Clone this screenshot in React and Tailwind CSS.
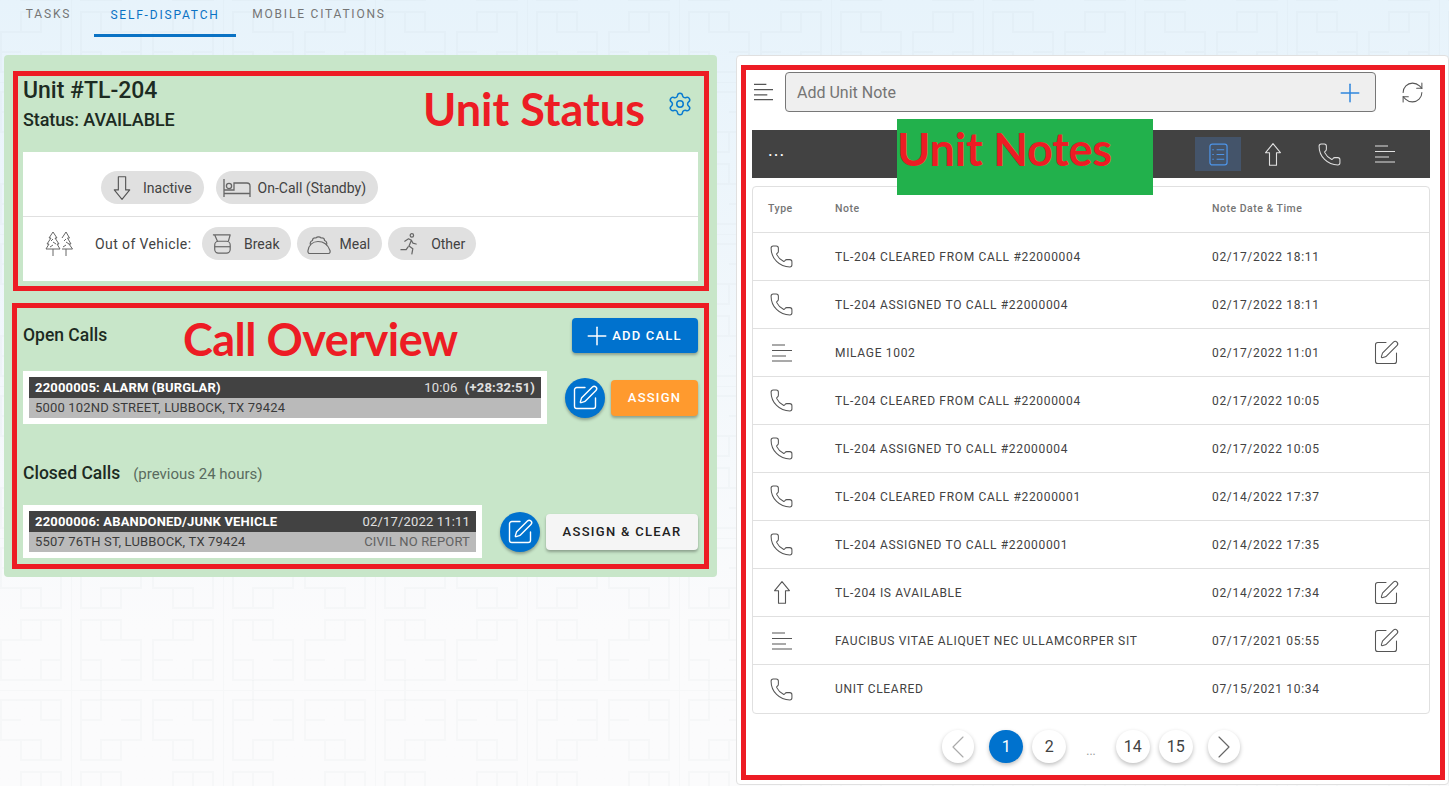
import { ChevronLeft, ChevronRight, Phone, Plus, RefreshCw, Settings, SquarePen } from "lucide-react";

const notes = [
  { type: "phone", text: "TL-204 CLEARED FROM CALL #22000004", date: "02/17/2022 18:11" },
  { type: "phone", text: "TL-204 ASSIGNED TO CALL #22000004", date: "02/17/2022 18:11" },
  { type: "note", text: "MILAGE 1002", date: "02/17/2022 11:01", edit: true },
  { type: "phone", text: "TL-204 CLEARED FROM CALL #22000004", date: "02/17/2022 10:05" },
  { type: "phone", text: "TL-204 ASSIGNED TO CALL #22000004", date: "02/17/2022 10:05" },
  { type: "phone", text: "TL-204 CLEARED FROM CALL #22000001", date: "02/14/2022 17:37" },
  { type: "phone", text: "TL-204 ASSIGNED TO CALL #22000001", date: "02/14/2022 17:35" },
  { type: "up", text: "TL-204 IS AVAILABLE", date: "02/14/2022 17:34", edit: true },
  { type: "note", text: "FAUCIBUS VITAE ALIQUET NEC ULLAMCORPER SIT", date: "07/17/2021 05:55", edit: true },
  { type: "phone", text: "UNIT CLEARED", date: "07/15/2021 10:34", last: true },
];

const LinesIcon = ({ className }) => (
  <svg viewBox="0 0 20 18" fill="none" stroke="currentColor" strokeWidth="1.2" className={className}>
    <path d="M0 1h13M0 6.500h20M0 12h14M0 17h20" />
  </svg>
);

const ArrowIcon = ({ className }) => (
  <svg viewBox="0 0 16 23" fill="none" stroke="currentColor" strokeWidth="1.1" strokeLinejoin="round" className={className}>
    <path d="M8 .7L15.400 9.700H11.500V22.300H4.500V9.700H.6Z" />
  </svg>
);

const BedIcon = () => (
  <svg viewBox="0 0 28 20" fill="none" stroke="currentColor" strokeWidth="1.300" className="h-5 w-7 text-[#666]">
    <path d="M1 1v18M1 15.500h26V19M27 15.500V8a3 3 0 0 0-3-3H11v7H1" />
    <circle cx="6" cy="8" r="2.600" />
  </svg>
);

const PotIcon = () => (
  <svg viewBox="0 0 22 24" fill="none" stroke="currentColor" strokeWidth="1.300" strokeLinejoin="round" className="h-6 w-5 text-[#666]">
    <path d="M1 2h19l-2 7M3 2l3 7" />
    <rect x="3" y="9" width="17" height="13" rx="4" />
    <path d="M3 15h17" />
  </svg>
);

const TacoIcon = () => (
  <svg viewBox="0 0 24 22" fill="none" stroke="currentColor" strokeWidth="1.200" strokeLinejoin="round" className="h-[22px] w-6 text-[#666]">
    <path d="M2.500 20.500c-1.500 0-1.700-2-1.500-3C2 12 6 8.500 11 8.500c5.500 0 10 3.500 12 9 .4 1.500 0 3-1.500 3z" />
    <path d="M3.500 12c-1-2.500.5-4 2-4.500 0-2 1.500-3 3.500-2.500 1-1.500 4-1.500 5 0 2-.5 3.500.5 3.500 2.500 1.500.5 3 2 2 4.500" />
  </svg>
);

const RunnerIcon = () => (
  <svg viewBox="0 0 20 24" fill="none" stroke="currentColor" strokeWidth="1.300" strokeLinecap="round" strokeLinejoin="round" className="h-6 w-[19px] text-[#666]">
    <circle cx="12.500" cy="3" r="1.800" />
    <path d="M5 9l4-2.500 3 1.500-2.500 6 4 3-1 5.500M12 8l1.500 3 3.500 1M8.500 15l-2 3H1" />
  </svg>
);

const TreesIcon = () => (
  <svg viewBox="0 0 29 25" fill="none" stroke="currentColor" strokeWidth="1" strokeLinejoin="round" className="h-[25px] w-[29px] text-[#666]">
    <path d="M8 1l4 6h-2l4 6h-2l3 5H1l3-5H2l4-6H4zM8 18v7M8 8l-2 2M8 11l3 2M8 14l-3 2" />
    <path d="M21 1l3.500 6h-2l3.500 6h-2l3.500 5H17M21 18v7M21 8l-2 2M21 11l3 2M21 14l-3 2M17 7l4-6" />
  </svg>
);

const ChecklistIcon = () => (
  <svg viewBox="0 0 20 24" fill="none" stroke="currentColor" strokeWidth="1.300" className="h-[23px] w-[19px] text-[#4d94e8]">
    <rect x="1" y="1" width="18" height="22" rx="2.500" />
    <path d="M8 7h8M8 12h8M8 17h8M3.500 7h1.500M3.500 12h1.500M3.500 17h1.500" />
  </svg>
);

const Chip = ({ icon, label, className }) => (
  <div className={`flex h-[33px] items-center rounded-full bg-[#e0e0e0] text-sm text-[#424242] ${className}`}>
    {icon}
    <span>{label}</span>
  </div>
);

const EditCircle = () => (
  <button className="flex h-10 w-10 items-center justify-center rounded-full bg-[#0072ce] text-white shadow-[0_2px_3px_rgba(0,0,0,0.3)]">
    <SquarePen size={28} strokeWidth={1.2} />
  </button>
);

const CallCard = ({ className, title, time, address, note }) => (
  <div className={`h-[53px] bg-white p-1.5 text-[13px] tracking-[0.17px] ${className}`}>
    <div className="flex h-[21px] items-center justify-between bg-[#424242] px-1.5 text-white">
      <span className="font-bold">{title}</span>
      <span className="text-[#e0e0e0]">{time}</span>
    </div>
    <div className="flex h-5 items-center justify-between bg-[#bababa] px-1.5 text-[#3a3a3a]">
      <span>{address}</span>
      <span className="text-[#616161]">{note}</span>
    </div>
  </div>
);

const PageButton = ({ children, className }) => (
  <button className={`flex h-[33px] items-center justify-center rounded-full text-base shadow-[0_2px_4px_rgba(0,0,0,0.25)] ${className}`}>
    {children}
  </button>
);

const BackgroundPattern = () => (
  <svg className="absolute inset-0 h-full w-full" xmlns="http://www.w3.org/2000/svg">
    <defs>
      <g id="cell" fill="none">
        <path d="M10 10H70V50H50V70H10ZM30 10V30H10M50 30H70M50 50H30V70" />
      </g>
      <pattern id="tile" x="71" y="82" width="152" height="152" patternUnits="userSpaceOnUse">
        <g stroke="#7f8c99" strokeOpacity="0.04" strokeWidth="2" fill="none">
          <use href="#cell" />
          <use href="#cell" transform="matrix(-1 0 0 1 152 0)" />
          <use href="#cell" transform="matrix(1 0 0 -1 0 152)" />
          <use href="#cell" transform="matrix(-1 0 0 -1 152 152)" />
          <path d="M0 0V152M0 0H152M30 -10V10M30 142V162" />
        </g>
      </pattern>
    </defs>
    <rect width="100%" height="100%" fill="url(#tile)" />
  </svg>
);

export default function App() {
  return (
    <div className="relative flex h-[786px] w-[1449px] overflow-hidden bg-linear-to-b from-[#e7f3fb] to-[#fbfbfc] to-80% font-[Roboto,sans-serif]">
      <BackgroundPattern />

      {/* left column */}
      <div className="relative w-[736px] shrink-0 pl-1">
        <div className="flex h-[37px] pl-[6px] text-xs tracking-[1.800px] uppercase text-[#757575]">
          <div className="flex h-[28px] w-[77px] items-center justify-center">Tasks</div>
          <div className="ml-[7px] flex h-[37px] w-[142px] justify-center border-b-[3px] border-[#0a72c4] pt-[7px] text-[#0a72c4]">Self-Dispatch</div>
          <div className="flex h-[28px] w-[166px] items-center justify-center">Mobile Citations</div>
        </div>

        <div className="mt-[18px] h-[522px] w-[713px] rounded bg-[#c8e6c9] pt-4">
          {/* unit status */}
          <div className="relative ml-[9px] h-[220px] w-[696px] border-[5px] border-[#ed1c24] pr-[6px] pl-[5px] text-[#1c2b22]">
            <div className="flex h-[76px] justify-between">
              <div>
                <div className="h-[29px] text-[23px] leading-[30px] font-medium">Unit #TL-204</div>
                <div className="mt-[3px] h-6 text-lg leading-6 font-medium tracking-[-0.1px]">Status: AVAILABLE</div>
              </div>
              <Settings size={26} strokeWidth={1.4} className="mt-[15px] mr-[5px] text-[#0a7cd0]" />
            </div>
            <div className="bg-white">
              <div className="flex h-[65px] items-start gap-3 border-b border-[#e0e0e0] pt-[19px] pl-[78px]">
                <Chip className="pr-3 pl-[12px]" label="Inactive" icon={<ArrowIcon className="mr-3 h-6 w-[18px] rotate-180 text-[#555]" />} />
                <Chip className="pr-3 pl-[7px]" label="On-Call (Standby)" icon={<span className="mr-[7px]"><BedIcon /></span>} />
              </div>
              <div className="flex h-[64px] items-start pt-[10px] pl-[22px] text-sm text-[#424242]">
                <span className="mt-1 w-[50px]"><TreesIcon /></span>
                <span className="mt-[7px] w-[107px] tracking-[0.4px]">Out of Vehicle:</span>
                <div className="flex gap-1.5">
                  <Chip className="pr-3 pl-[10px]" label="Break" icon={<span className="mr-3"><PotIcon /></span>} />
                  <Chip className="pr-3 pl-[10px]" label="Meal" icon={<span className="mr-2"><TacoIcon /></span>} />
                  <Chip className="pr-[11px] pl-3" label="Other" icon={<span className="mr-3"><RunnerIcon /></span>} />
                </div>
              </div>
            </div>
            <div className="absolute top-[5px] left-[405px] font-[Lato,sans-serif] text-[45px] leading-[56px] font-bold text-[#ed1c24]">Unit Status</div>
          </div>

          {/* call overview */}
          <div className="relative mt-3 ml-2 h-[266px] w-[697px] border-[5px] border-[#ed1c24] px-[6px] pt-[10px] text-[#1c2b22]">
            <div className="flex h-[35px] items-center justify-between">
              <span className="text-[17.500px] font-medium">Open Calls</span>
              <button className="flex h-[35px] w-[126px] items-center justify-center rounded bg-[#0072ce] pr-[6px] text-[13px] font-medium tracking-[1.200px] text-white shadow-[0_2px_3px_rgba(0,0,0,0.3)]">
                <Plus size={30} strokeWidth={1.2} />
                ADD CALL
              </button>
            </div>
            <div className="mt-[18px] flex items-center justify-between">
              <CallCard
                className="w-[524px]"
                title="22000005: ALARM (BURGLAR)"
                time={<>10:06 <b className="ml-1 font-bold">(+28:32:51)</b></>}
                address="5000 102ND STREET, LUBBOCK, TX 79424"
              />
              <div className="flex items-center gap-1.5">
                <EditCircle />
                <button className="h-9 w-[87px] rounded bg-[#ff9a2e] text-[13px] font-medium tracking-[1.200px] text-white shadow-[0_2px_3px_rgba(0,0,0,0.3)]">ASSIGN</button>
              </div>
            </div>
            <div className="mt-[37px] flex h-6 items-center">
              <span className="text-[17.500px] font-medium">Closed Calls</span>
              <span className="mt-0.5 ml-[13px] text-[15px] text-[#5a6b5e]">(previous 24 hours)</span>
            </div>
            <div className="mt-5 flex items-center justify-between">
              <CallCard
                className="w-[459px]"
                title="22000006: ABANDONED/JUNK VEHICLE"
                time="02/17/2022 11:11"
                address="5507 76TH ST, LUBBOCK, TX 79424"
                note="CIVIL NO REPORT"
              />
              <div className="flex items-center gap-1.5">
                <EditCircle />
                <button className="h-9 w-[152px] rounded bg-[#f5f5f5] text-[13px] font-medium tracking-[1.300px] text-[#212121] shadow-[0_2px_3px_rgba(0,0,0,0.3)]">ASSIGN &amp; CLEAR</button>
              </div>
            </div>
            <div className="absolute top-[3px] left-[166px] font-[Lato,sans-serif] text-[45px] leading-[56px] font-bold tracking-[-0.5px] text-[#ed1c24]">Call Overview</div>
          </div>
        </div>
      </div>

      {/* right column */}
      <div className="relative w-[713px] shrink-0 pt-[55px]">
        <div className="h-[730px] w-[713px] rounded border border-[#e0e0e0] bg-white pt-[9px] pl-[4px]">
          <div className="relative h-[715px] w-[704px] border-[5px] border-[#ed1c24] pr-[10px] pl-[6px]">
            <div className="flex h-[42px] items-center pt-[2px]">
              <LinesIcon className="ml-[2px] h-[18px] w-[19px] text-[#555]" />
              <div className="ml-3 flex h-10 w-[591px] items-center justify-between rounded border border-[#777] bg-[#efefef] pt-px pr-[10px] pl-[11px] text-base text-[#757575]">
                Add Unit Note
                <Plus size={30} strokeWidth={1.2} className="text-[#2f86dd]" />
              </div>
              <RefreshCw size={25} strokeWidth={1} className="ml-[24px] text-[#555]" />
            </div>

            <div className="mt-[18px] flex h-12 items-center bg-[#424242] text-[#e0e0e0]">
              <span className="mb-2 ml-4 text-lg leading-none tracking-[1px] text-white">...</span>
              <div className="ml-auto flex items-center pr-[13px]">
                <div className="flex h-[34px] w-[46px] items-center justify-center bg-[#44546a]"><ChecklistIcon /></div>
                <div className="flex w-[64px] justify-center"><ArrowIcon className="h-[23px] w-4" /></div>
                <div className="flex w-[48px] justify-center"><Phone size={25} strokeWidth={1} /></div>
                <div className="flex w-[64px] justify-center"><LinesIcon className="h-[18px] w-5" /></div>
              </div>
            </div>

            <div className="mt-2 h-[528px] rounded border border-[#e0e0e0] bg-white">
              <div className="flex h-[46px] items-center border-b border-[#e0e0e0] pb-0.5 text-[10.500px] font-medium tracking-[0.5px] text-[#757575]">
                <div className="w-[82px] pl-[15px]">Type</div>
                <div className="w-[377px]">Note</div>
                <div>Note Date &amp; Time</div>
              </div>
              {notes.map((n, i) => (
                <div key={i} className={`flex h-12 items-center text-xs tracking-[0.68px] text-[#424242] ${n.last ? "" : "border-b border-[#e0e0e0]"}`}>
                  <div className="flex w-[82px] pl-4 text-[#555]">
                    {n.type === "phone" && <Phone size={25} strokeWidth={1} />}
                    {n.type === "up" && <ArrowIcon className="ml-[5px] h-[23px] w-4" />}
                    {n.type === "note" && <LinesIcon className="ml-[3px] h-[18px] w-5" />}
                  </div>
                  <div className="w-[377px]">{n.text}</div>
                  <div className="w-[160px]">{n.date}</div>
                  {n.edit && <SquarePen size={28} strokeWidth={0.9} className="text-[#555]" />}
                </div>
              ))}
            </div>

            <div className="mt-4 flex items-center justify-center">
              <PageButton className="w-8 bg-white text-[#aaa]"><ChevronLeft size={40} strokeWidth={0.7} className="shrink-0" /></PageButton>
              <PageButton className="ml-[15px] w-[34px] bg-[#0072ce] text-white">1</PageButton>
              <PageButton className="ml-[9px] w-[34px] bg-white text-[#424242]">2</PageButton>
              <span className="mx-5 mt-2 text-xs text-[#999]">...</span>
              <PageButton className="w-[34px] bg-white text-[#424242]">14</PageButton>
              <PageButton className="ml-[9px] w-[34px] bg-white text-[#424242]">15</PageButton>
              <PageButton className="ml-[15px] w-8 bg-white text-[#666]"><ChevronRight size={40} strokeWidth={0.7} className="shrink-0" /></PageButton>
            </div>

            <div className="absolute top-[49px] left-[151px] h-[76px] w-[256px] bg-[#22b14c] font-[Lato,sans-serif] text-[45px] leading-[60px] font-bold tracking-[-0.2px] text-[#ed1c24]">Unit Notes</div>
          </div>
        </div>
      </div>
    </div>
  );
}
